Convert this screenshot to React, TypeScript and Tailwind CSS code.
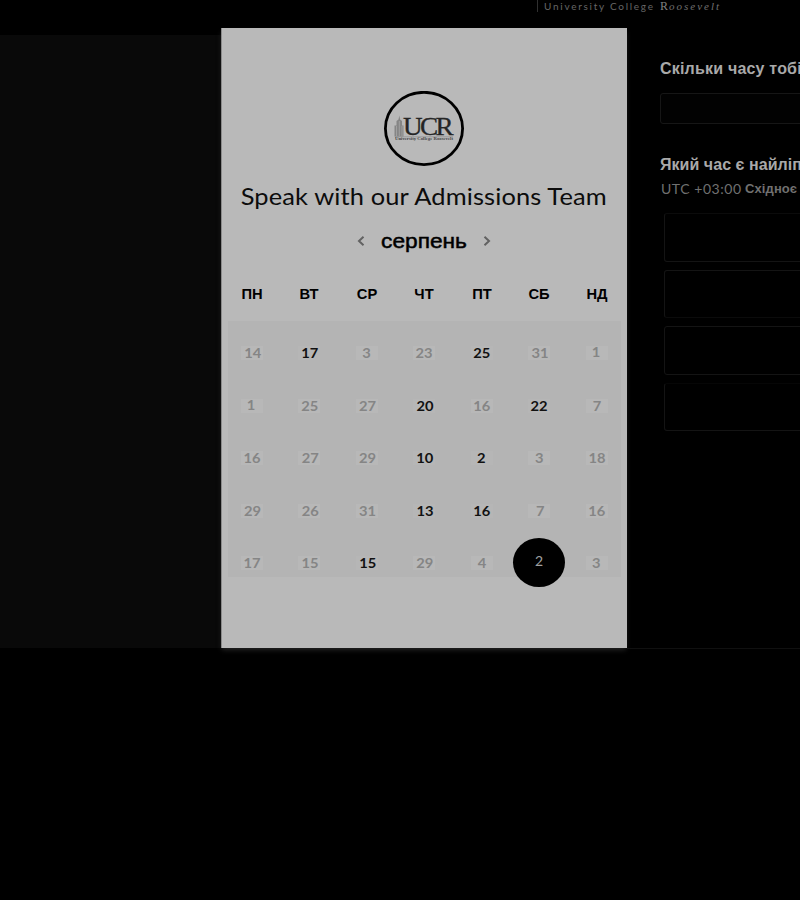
import React from "react";

type Day = { n: number; open?: boolean; selected?: boolean; dx?: number; dy?: number };

const weekdays = ["ПН", "ВТ", "СР", "ЧТ", "ПТ", "СБ", "НД"];

const weeks: Day[][] = [
  [{ n: 14, dx: 1.7 }, { n: 17, open: true }, { n: 3, dx: 0.5 }, { n: 23, dx: 0 }, { n: 25, open: true }, { n: 31, dx: 1 }, { n: 1, dx: 0, dy: -0.5 }],
  [{ n: 1, dx: 0, dy: -1 }, { n: 25 }, { n: 27, dx: 1.4 }, { n: 20, open: true, dx: 1 }, { n: 16 }, { n: 22, open: true, dx: 0 }, { n: 7, dx: 1 }],
  [{ n: 16, dx: 1 }, { n: 27, dx: 1.2 }, { n: 29, dx: 1.4 }, { n: 10, open: true }, { n: 2, open: true, dx: 0.3 }, { n: 3, dx: 0.3 }, { n: 18, dx: 1 }],
  [{ n: 29, dx: 1.4 }, { n: 26, dx: 1.2 }, { n: 31, dx: 1.4 }, { n: 13, open: true, dx: 1 }, { n: 16, open: true }, { n: 7, dx: 1.3 }, { n: 16 }],
  [{ n: 17, dx: 1 }, { n: 15, dx: 1 }, { n: 15, open: true, dx: 1.7 }, { n: 29 }, { n: 4, dx: 1 }, { n: 2, selected: true, dx: 0 }, { n: 3, dx: 0.3 }],
];

function DayCell({ day }: { day: Day }) {
  if (day.selected) {
    return (
      <div className="relative h-[14px] w-[22px]">
        <div className="absolute -left-[15px] -top-[18px] flex h-[49px] w-[52px] items-center justify-center rounded-[50%] bg-black text-[14px] font-normal text-[#a0a0a0]">
          <span className="-mt-[3px]">{day.n}</span>
        </div>
      </div>
    );
  }
  return (
    <div
      className={
        day.open
          ? "flex h-[14px] w-[22px] items-center justify-center bg-[#b6b6b6] text-[#111]"
          : "flex h-[14px] w-[22px] items-center justify-center bg-[#b8b8b8] text-[#858585]"
      }
    >
      <span style={{ transform: `translate(${day.dx ?? 0.7}px, ${(day.dy ?? 0) - 0.3}px) scaleX(1.05)` }}>{day.n}</span>
    </div>
  );
}

function Logo() {
  return (
    <svg width="80" height="76" viewBox="0 0 80 76" className="block">
      <ellipse cx="40" cy="37.5" rx="38.6" ry="36.2" fill="none" stroke="#000" strokeWidth="2.8" />
      <g fill="#858585">
        <path d="M10.5 45.5V34.5h2V30l2-1.5.8-4 .8 4 1.9 1.5v4.5h1.5v11z" />
        <path d="M12.5 35v10M15.3 30v15M18 35v10" stroke="#acacac" strokeWidth=".7" />
      </g>
      <text x="19" y="44" fontFamily="'Liberation Serif', serif" fill="#252525" stroke="#252525" strokeWidth=".3" fontSize="25" letterSpacing="-2.4" textLength="48" lengthAdjust="spacingAndGlyphs">
        UCR
      </text>
      <path d="M11 45.8H69" stroke="#888" strokeWidth=".6" />
      <text x="11" y="49.3" fontFamily="'Liberation Serif', serif" fontWeight="700" fontSize="4" fill="#454545" textLength="58" lengthAdjust="spacingAndGlyphs">
        University College Roosevelt
      </text>
    </svg>
  );
}

function Chevron({ right = false }: { right?: boolean }) {
  return (
    <svg width="8" height="10" viewBox="0 0 8 10" fill="none" stroke="#626262" strokeWidth="2" className="-mt-px">
      <path d={right ? "M1.5 .8L6 5 1.5 9.2" : "M6.5 .8L2 5 6.5 9.2"} />
    </svg>
  );
}

export default function App() {
  return (
    <div className="flex h-[900px] w-[800px] flex-col overflow-hidden bg-black font-['Lato',sans-serif]">
      <header className="h-[28px] shrink-0 pl-[537px]">
        <svg width="190" height="14" viewBox="0 0 190 14" className="block">
          <path d="M.5 0V12" stroke="#303030" />
          <text x="7" y="9.5" fontFamily="Lato, sans-serif" fontSize="10" fill="#666" textLength="109">University College</text>
          <text x="123" y="10" fontFamily="'Liberation Serif', serif" fontSize="12" fill="#808080">R</text>
          <text x="132" y="10" fontFamily="'Liberation Serif', serif" fontStyle="italic" fontSize="11" fill="#707070" textLength="50">oosevelt</text>
        </svg>
      </header>

      <main className="flex h-[620px] shrink-0">
        <aside className="mt-[7px] w-[221px] shrink-0 bg-[#090909]" />

        <section className="flex w-[406px] shrink-0 flex-col items-center border-l border-[#8a8a8a] bg-[#b9b9b9] pr-px shadow-[0_3px_5px_-1px_#252525]">
          <div className="mt-[63px] h-[76px]">
            <Logo />
          </div>
          <h1 className="mt-[13px] h-[32px] scale-x-[1.06] whitespace-nowrap text-[24px] leading-[32px] tracking-[0.12px] text-[#0c0c0c]">
            Speak with our Admissions Team
          </h1>
          <div className="mt-[14px] flex h-[30px] items-center font-['Liberation_Sans',sans-serif]">
            <Chevron />
            <h2 className="mx-[16px] w-[86px] scale-x-[1.08] whitespace-nowrap text-center text-[21px] leading-[30px] text-black [-webkit-text-stroke:0.5px_black]">
              серпень
            </h2>
            <Chevron right />
          </div>
          <div className="mt-[28px] flex h-[20px] w-[367px] justify-between font-['Liberation_Sans',sans-serif] text-[14px] font-bold leading-[20px] text-black">
            {weekdays.map((d) => (
              <span key={d} className="flex w-[22px] scale-x-[1.05] justify-center">{d}</span>
            ))}
          </div>
          <div className="mt-[17px] h-[256px] w-[393px] bg-[#b4b4b4] px-[13px] pt-[6px] text-[14px] font-bold leading-[14px]">
            {weeks.map((week, i) => (
              <div key={i} className="flex h-[52.5px] items-center justify-between">
                {week.map((day, j) => (
                  <DayCell key={j} day={day} />
                ))}
              </div>
            ))}
          </div>
        </section>

        <section className="flex min-w-0 flex-1 flex-col overflow-hidden whitespace-nowrap pl-[33px] pt-[31px] font-['Liberation_Sans',sans-serif]">
          <h3 className="h-[20px] text-[16px] font-bold leading-[20px] tracking-[0.2px] text-[#a9a9a9]">Скільки часу тобі</h3>
          <div className="mt-[14px] h-[31px] w-[200px] shrink-0 rounded-[3px] border border-[#161616] bg-[#020202]" />
          <h3 className="mt-[31px] h-[20px] text-[16px] font-bold leading-[20px] tracking-[0.05px] text-[#a9a9a9]">Який час є найліп</h3>
          <p className="mt-[6px] flex h-[16px] pl-px text-[13px] leading-[16px] text-[#707070]">
            <span className="w-[84px] shrink-0 font-['Lato',sans-serif] text-[14px] tracking-[0.55px]">UTC +03:00</span>
            <b className="shrink-0 tracking-[0.1px]">Східноє</b>
          </p>
          <div className="ml-[4px] mt-[16px] flex flex-col gap-[8px]">
            <div className="h-[49px] w-[200px] rounded-[3px] border border-[#141414] border-t-[#0b0b0b]" />
            <div className="h-[48px] w-[200px] rounded-[3px] border border-[#141414] border-b-[#0b0b0b]" />
            <div className="h-[49px] w-[200px] rounded-[3px] border border-[#141414]" />
            <div className="h-[48px] w-[200px] rounded-[3px] border border-[#141414] border-t-[#060606]" />
          </div>
        </section>
      </main>
      <div className="ml-[627px] h-px shrink-0 bg-[#101010]" />
    </div>
  );
}
